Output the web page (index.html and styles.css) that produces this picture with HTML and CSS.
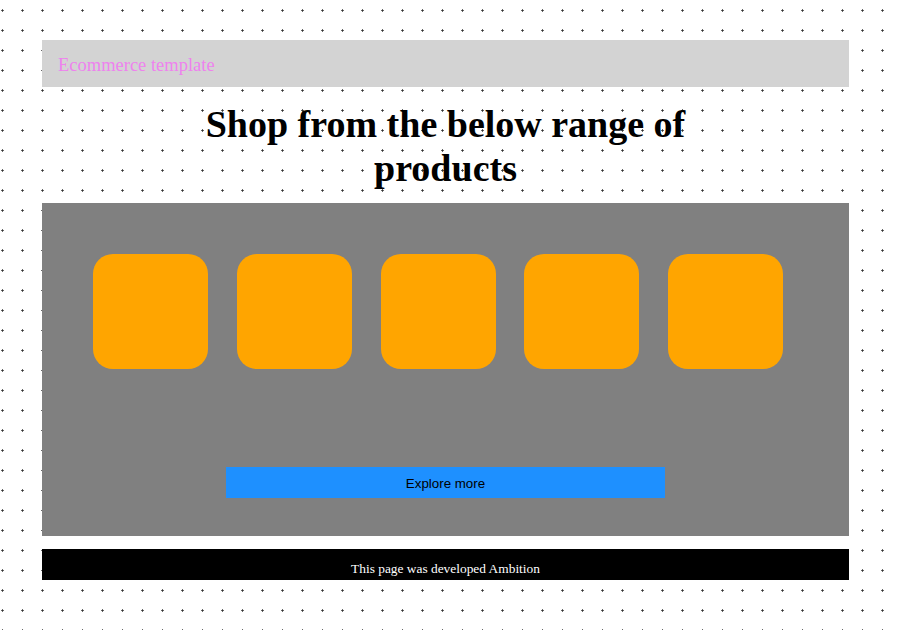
FILE: index.html
```html
<!DOCTYPE html>
<html>
<head>
<meta charset="utf-8">
<link rel="stylesheet" href="styles.css">
</head>
<body>
<div class="page">
  <header class="topbar">
    <span class="brand">Ecommerce template</span>
  </header>
  <h1 class="title">Shop from the below range of products</h1>
  <section class="products">
    <div class="grid">
      <div class="item"></div>
      <div class="item"></div>
      <div class="item"></div>
      <div class="item"></div>
      <div class="item"></div>
    </div>
    <div class="actions">
      <button class="explore">Explore more</button>
    </div>
  </section>
  <footer class="footer">This page was developed Ambition</footer>
</div>
</body>
</html>
```

FILE: styles.css
```css
html, body {
  margin: 0;
  padding: 0;
}
body {
  width: 900px;
  height: 630px;
  overflow: hidden;
  background-color: #fff;
  background-image: radial-gradient(circle at 2.5px 10.5px, #333 0.9px, transparent 1.3px);
  background-size: 20px 20px;
  font-family: "Liberation Serif", "Times New Roman", serif;
}
.page {
  width: 807px;
  margin-left: 42px;
  padding-top: 40px;
}
.topbar {
  box-sizing: border-box;
  height: 47px;
  background: #d3d3d3;
  display: flex;
  align-items: center;
  padding: 3px 0 0 16px;
}
.brand {
  color: #ee82ee;
  font-size: 18.5px;
}
.title {
  width: 540px;
  margin: 15px auto 13px;
  text-align: center;
  font-size: 38px;
  line-height: 44px;
  font-weight: bold;
  color: #000;
}
.products {
  height: 333px;
  background: #808080;
  display: flex;
  flex-direction: column;
}
.grid {
  display: flex;
  gap: 28.75px;
  padding: 51px 0 0 51px;
}
.item {
  width: 115px;
  height: 115px;
  background: #ffa500;
  border-radius: 20px;
}
.actions {
  margin-top: 98px;
  padding-left: 184px;
}
.explore {
  width: 439px;
  height: 31px;
  border: none;
  background: #1e90ff;
  font-family: "Liberation Sans", Arial, sans-serif;
  font-size: 13.33px;
  color: #000;
  padding: 1px 0 0;
}
.footer {
  box-sizing: border-box;
  margin-top: 13px;
  height: 31px;
  padding-top: 8px;
  background: #000;
  color: #fff;
  font-size: 13.4px;
  display: flex;
  align-items: center;
  justify-content: center;
}
```
